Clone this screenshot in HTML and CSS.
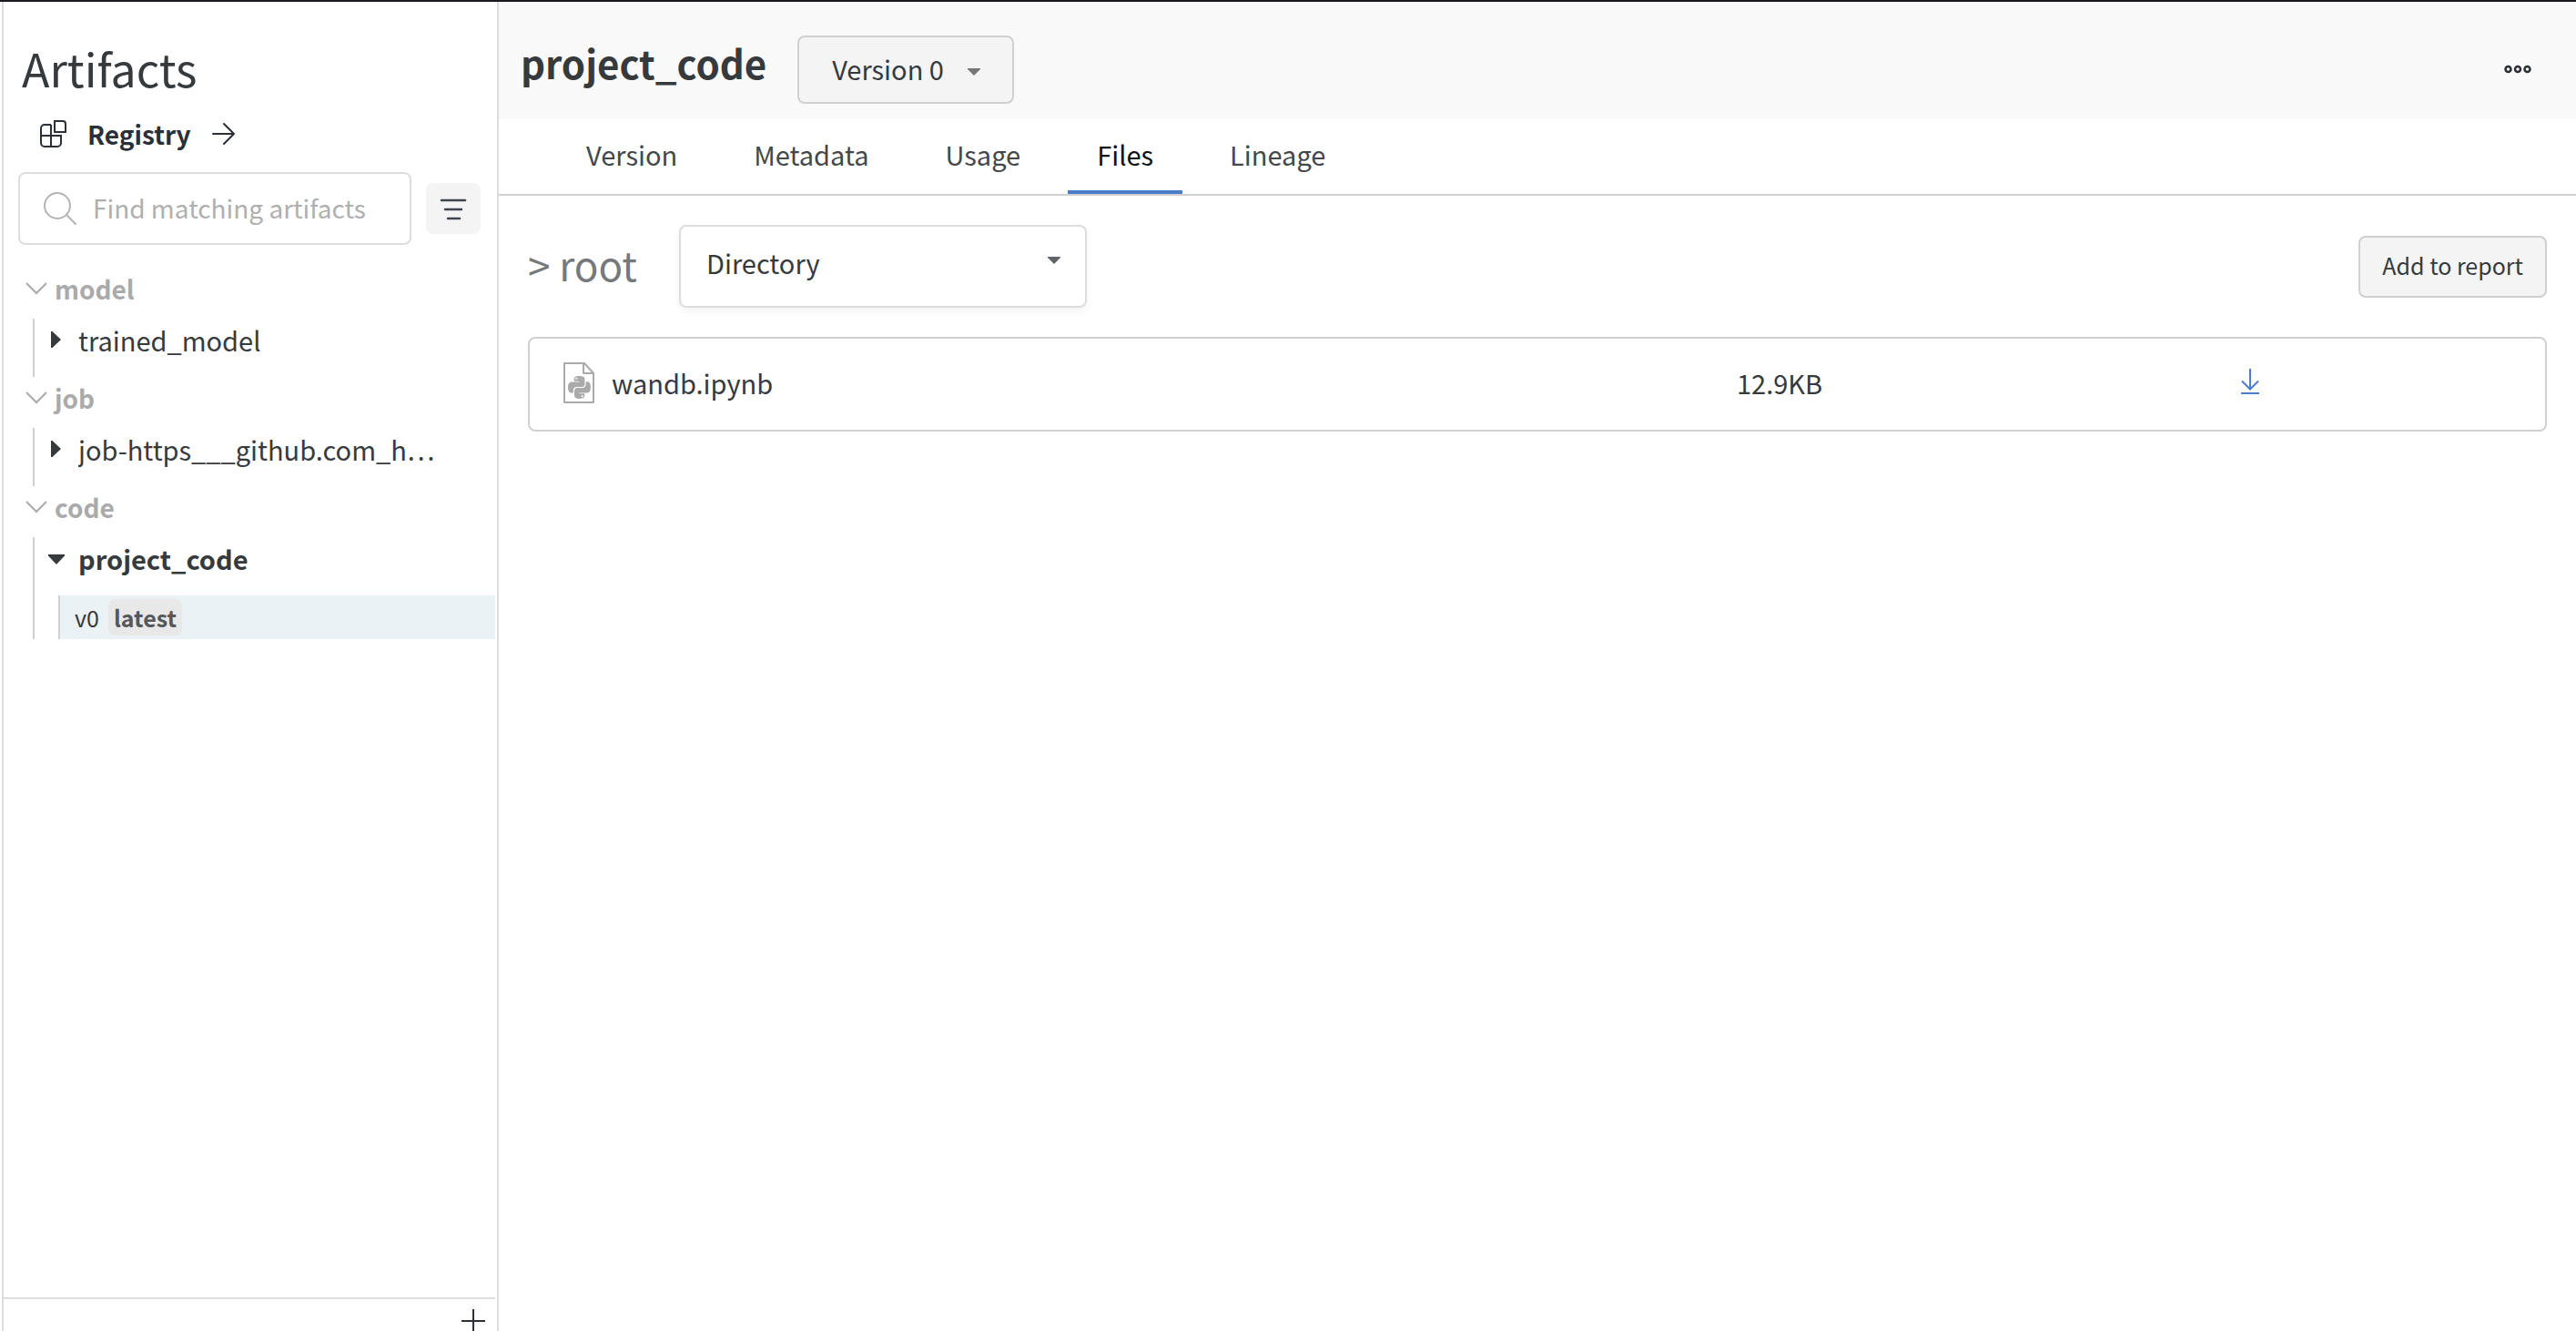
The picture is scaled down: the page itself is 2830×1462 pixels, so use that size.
FILE: index.html
```html
<!DOCTYPE html>
<html lang="en">
<head>
<meta charset="utf-8">
<meta name="viewport" content="width=device-width, initial-scale=1">
<title>project_code – Artifacts</title>
<link rel="stylesheet" href="styles.css">
</head>
<body>
<div class="app">
  <aside class="sidebar">
    <h1 class="sidebar-title">Artifacts</h1>
    <a class="registry" href="#registry">
      <svg class="icon" width="32" height="32" viewBox="0 0 32 32" fill="none" stroke="currentColor" stroke-width="2">
        <path d="M14 6H7a4 4 0 0 0-4 4v16a4 4 0 0 0 4 4h14a4 4 0 0 0 4-4v-8H3M14 6v24M18 2h9a3 3 0 0 1 3 3v9H18z"/>
      </svg>
      <span>Registry</span>
      <svg class="icon" width="28" height="28" viewBox="0 0 28 28" fill="none" stroke="currentColor" stroke-width="2" stroke-linecap="round" stroke-linejoin="round">
        <path d="M2 14h23M14 3l11 11-11 11"/>
      </svg>
    </a>
    <div class="search-row">
      <label class="search">
        <svg class="icon" width="40" height="40" viewBox="0 0 40 40" fill="none" stroke="currentColor" stroke-width="2" stroke-linecap="round">
          <circle cx="17" cy="18" r="14"/><path d="M27 28l10 10"/>
        </svg>
        <input class="search-input" type="text" placeholder="Find matching artifacts" aria-label="Find matching artifacts">
      </label>
      <button class="filter" type="button" aria-label="Filter">
        <svg class="icon" width="32" height="32" viewBox="0 0 32 32" stroke="currentColor" stroke-width="2.500" stroke-linecap="round">
          <path d="M3 7h26M7 17h18M10 27h13"/>
        </svg>
      </button>
    </div>
    <nav class="tree" aria-label="Artifacts">
      <section>
        <button class="group" type="button" aria-expanded="true">
          <svg class="icon" width="24" height="14" viewBox="0 0 24 14" fill="none" stroke="currentColor" stroke-width="2"><path d="M1 1l11 11L23 1"/></svg>
          <span>model</span>
        </button>
        <div class="branch">
          <button class="item" type="button" aria-expanded="false">
            <svg class="icon" width="20" height="20" viewBox="0 0 20 20" fill="currentColor"><path d="M4 1h1.500l9.500 9-9.500 9H4z"/></svg>
            <span class="item-name">trained_model</span>
          </button>
        </div>
      </section>
      <section>
        <button class="group" type="button" aria-expanded="true">
          <svg class="icon" width="24" height="14" viewBox="0 0 24 14" fill="none" stroke="currentColor" stroke-width="2"><path d="M1 1l11 11L23 1"/></svg>
          <span>job</span>
        </button>
        <div class="branch">
          <button class="item" type="button" aria-expanded="false">
            <svg class="icon" width="20" height="20" viewBox="0 0 20 20" fill="currentColor"><path d="M4 1h1.500l9.500 9-9.500 9H4z"/></svg>
            <span class="item-name">job-https___github.com_h…</span>
          </button>
        </div>
      </section>
      <section>
        <button class="group" type="button" aria-expanded="true">
          <svg class="icon" width="24" height="14" viewBox="0 0 24 14" fill="none" stroke="currentColor" stroke-width="2"><path d="M1 1l11 11L23 1"/></svg>
          <span>code</span>
        </button>
        <div class="branch branch-open">
          <button class="item item-open" type="button" aria-expanded="true">
            <svg class="icon" width="20" height="20" viewBox="0 0 20 20" fill="currentColor"><path d="M1 6h18v1.500L10 17 1 7.500z"/></svg>
            <span class="item-name">project_code</span>
          </button>
          <a class="version" href="#v0">v0 <span class="tag">latest</span></a>
        </div>
      </section>
    </nav>
    <footer class="sidebar-footer">
      <button class="plain" type="button" aria-label="Add artifact">
        <svg class="icon" width="28" height="28" viewBox="0 0 28 28" fill="none" stroke="currentColor" stroke-width="2"><path d="M14 1v26M1 14h26"/></svg>
      </button>
    </footer>
  </aside>

  <main class="main">
    <header class="header">
      <h2 class="header-title">project_code</h2>
      <div class="picker picker-version">
        <select class="picker-select" aria-label="Version">
          <option>Version 0</option>
        </select>
        <svg class="caret" width="16" height="10" viewBox="0 0 16 10" fill="currentColor"><path d="M1 1h14v1L8 9 1 2z"/></svg>
      </div>
      <button class="plain more" type="button" aria-label="More actions">
        <svg class="icon" width="32" height="10" viewBox="0 0 32 10" fill="none" stroke="currentColor" stroke-width="2.500">
          <circle cx="5.500" cy="5" r="3"/><circle cx="16" cy="5" r="3"/><circle cx="26.500" cy="5" r="3"/>
        </svg>
      </button>
    </header>
    <nav class="tabs" aria-label="Artifact sections">
      <a class="tab" href="#version">Version</a>
      <a class="tab" href="#metadata">Metadata</a>
      <a class="tab" href="#usage">Usage</a>
      <a class="tab tab-active" href="#files" aria-current="page">Files</a>
      <a class="tab" href="#lineage">Lineage</a>
    </nav>
    <section class="files">
      <div class="toolbar">
        <span class="path">&gt; root</span>
        <div class="picker picker-view">
          <select class="picker-select" aria-label="View">
            <option>Directory</option>
          </select>
          <svg class="caret" width="16" height="10" viewBox="0 0 16 10" fill="currentColor"><path d="M1 1h14v1L8 9 1 2z"/></svg>
        </div>
        <button class="report" type="button">Add to report</button>
      </div>
      <div class="card">
        <table class="file-table">
          <tbody>
            <tr>
              <td class="col-name">
                <a class="file" href="#wandb.ipynb">
                  <svg class="file-icon" width="36" height="48" viewBox="0 0 36 48">
                    <path d="M2 3h22l10 11v32H2zM23 3v11h11" fill="none" stroke="currentColor" stroke-width="2" stroke-linejoin="round"/>
                    <g transform="translate(6 17) scale(1.040)" fill="currentColor">
                      <path d="M11.900 0C6.800 0 6.500 2 6.500 3.300v2.200H12v.7H4.200C1.800 6.200 0 8 0 12c0 4.100 1.600 5.900 3.900 5.900h1.700v-2.700c0-2 1.600-3.600 3.600-3.600h5.500c1.600 0 3-1.400 3-3V3.300C17.700 1 15.500 0 11.900 0zM8.900 1.700a1 1 0 1 1 0 2 1 1 0 0 1 0-2z"/>
                      <path d="M12.100 24c5.100 0 5.400-2 5.400-3.300v-2.200H12v-.7h7.800c2.400 0 4.200-1.800 4.200-5.800 0-4.100-1.600-5.900-3.900-5.900h-1.300v2.700c0 2-1.600 3.600-3.600 3.600H9.700c-1.600 0-3 1.400-3 3v5.300c0 2.300 1.800 3.300 5.400 3.300zM15.100 22.300a1 1 0 1 1 0-2 1 1 0 0 1 0 2z"/>
                    </g>
                  </svg>
                  <span>wandb.ipynb</span>
                </a>
              </td>
              <td class="col-size">12.9KB</td>
              <td class="col-action">
                <a class="download" href="#download" aria-label="Download wandb.ipynb">
                  <svg class="icon" width="22" height="28" viewBox="0 0 22 28" fill="none" stroke="currentColor" stroke-width="2"><path d="M11 0v22M2 13.500l9 9 9-9M1 27h20"/></svg>
                </a>
              </td>
            </tr>
          </tbody>
        </table>
      </div>
    </section>
  </main>
</div>
</body>
</html>
```

FILE: styles.css
```css
* {
  box-sizing: border-box;
}

body {
  margin: 0;
  background: #fff;
  color: #363a3d;
  font-family: "Noto Sans CJK SC", "Noto Sans", sans-serif;
  font-size: 29px;
  line-height: 48px;
}

button,
input,
select {
  margin: 0;
  font: inherit;
  color: inherit;
}

button {
  padding: 0;
  border: 0;
  background: none;
  text-align: left;
  cursor: pointer;
}

a {
  color: inherit;
  text-decoration: none;
}

.icon,
.file-icon {
  display: block;
  flex: none;
}

.app {
  display: flex;
  height: 100vh;
  border-top: 2px solid #1a191f;
}

/* Sidebar */

.sidebar {
  display: flex;
  flex: none;
  flex-direction: column;
  width: 546px;
  margin-left: 2px;
  padding: 40px 2px 0 0;
  border: solid #ddd;
  border-width: 0 2px;
  overflow: hidden;
}

.sidebar-title {
  margin: 0 0 20px;
  padding-left: 20px;
  font-size: 50px;
  font-weight: 400;
  line-height: 64px;
}

.registry {
  display: flex;
  align-items: center;
  gap: 22px;
  padding-left: 38px;
  color: #2b3038;
  font-size: 28px;
  font-weight: 700;
  line-height: 42px;
}

.search-row {
  display: flex;
  align-items: center;
  gap: 16px;
  margin-top: 21px;
  padding: 0 16px;
}

.search {
  display: flex;
  flex: 1;
  align-items: center;
  gap: 16px;
  height: 80px;
  padding: 0 24px 2px;
  border: 2px solid #ddd;
  border-radius: 8px;
  color: #b3b3b3;
}

.search-input {
  flex: 1;
  min-width: 0;
  padding: 0;
  border: 0;
  outline: 0;
  background: none;
  color: #363a3d;
  font-size: 28px;
}

.search-input::placeholder {
  color: #afafaf;
  opacity: 1;
}

.filter {
  display: grid;
  flex: none;
  place-items: center;
  width: 60px;
  height: 56px;
  border-radius: 8px;
  background: #f4f4f4;
  color: #3f4650;
}

.tree {
  flex: 1;
  padding-top: 28px;
}

.group {
  display: flex;
  align-items: center;
  gap: 8px;
  margin-bottom: 13px;
  padding-left: 24px;
  color: #aaa;
  font-size: 28px;
  font-weight: 700;
  line-height: 40px;
}

.branch {
  margin: 0 0 3px 32px;
  padding-bottom: 18px;
  border-left: 2px solid #d0d0d0;
}

.branch-open {
  padding-bottom: 0;
}

.item {
  display: flex;
  align-items: center;
  gap: 14px;
  width: 100%;
  padding-left: 14px;
  line-height: 46px;
}

.item-name {
  overflow: hidden;
  text-overflow: ellipsis;
  white-space: nowrap;
}

.item-open {
  margin-bottom: 18px;
  font-weight: 700;
}

.version {
  display: flex;
  align-items: center;
  gap: 10px;
  height: 48px;
  margin-left: 26px;
  padding-left: 16px;
  border-left: 2px solid #d0d0d0;
  background: #eaf2f5;
  font-size: 25px;
}

.tag {
  padding: 0 6px;
  border-radius: 8px;
  background: #e8e8e8;
  color: #55585a;
  font-weight: 700;
  line-height: 40px;
}

.sidebar-footer {
  display: flex;
  justify-content: flex-end;
  height: 37px;
  padding: 10px 10px 0 0;
  border-top: 2px solid #ddd;
  overflow: hidden;
}

/* Main panel */

.main {
  flex: 1;
  min-width: 0;
}

.header {
  display: flex;
  align-items: flex-start;
  padding: 37px 48px 17px 24px;
  background: #f9f9f9;
}

.header-title {
  margin: 0 34px 0 0;
  font-size: 42px;
  font-weight: 700;
  line-height: 60px;
}

.plain {
  color: #2b3038;
}

.more {
  margin-left: auto;
  padding: 32px 0;
}

.picker {
  display: grid;
  align-items: center;
}

.picker-select,
.caret {
  grid-area: 1 / 1;
}

.picker-select {
  width: 100%;
  height: 100%;
  border: 2px solid #d0d0d0;
  border-radius: 8px;
  appearance: none;
  outline: 0;
}

.caret {
  justify-self: end;
  pointer-events: none;
}

.picker-version {
  width: 238px;
  height: 75px;
}

.picker-version .picker-select {
  padding: 0 36px 4px;
  background: #f4f4f4;
}

.picker-version .caret {
  margin: 4px 36px 0 0;
  color: #777;
}

.tabs {
  display: flex;
  gap: 20px;
  padding: 14px 64px 0;
  border-bottom: 2px solid #d0d0d0;
}

.tab {
  padding: 0 32px 16px;
  border-bottom: 4px solid transparent;
  color: #44484b;
}

.tab-active {
  border-color: #4c7dcc;
  color: #111;
}

.files {
  padding: 32px;
}

.toolbar {
  display: flex;
  align-items: center;
  margin-bottom: 32px;
}

.path {
  margin-right: 46px;
  padding-bottom: 6px;
  color: #76797b;
  font-size: 44px;
}

.picker-view {
  width: 448px;
  height: 91px;
}

.picker-view .picker-select {
  padding: 0 28px 10px;
  border-color: #ddd;
  background: #fff;
  box-shadow: 0 4px 8px #0000000d;
}

.picker-view .caret {
  margin: 0 28px 14px 0;
  color: #606468;
}

.report {
  height: 68px;
  margin-left: auto;
  padding: 0 24px 4px;
  border: 2px solid #d0d0d0;
  border-radius: 8px;
  background: #f4f4f4;
  font-size: 25px;
}

.card {
  padding-right: 4px;
  border: 2px solid #d0d0d0;
  border-radius: 8px;
}

.file-table {
  width: 100%;
  border-collapse: collapse;
  table-layout: fixed;
}

.file-table td {
  height: 100px;
  padding: 0 0 4px;
}

.col-name {
  width: 60%;
}

.col-size {
  width: 25%;
}

.file {
  display: flex;
  align-items: center;
  gap: 18px;
  padding-left: 36px;
}

.file-icon {
  color: #aaa;
}

.download {
  display: inline-block;
  color: #4c7dcc;
}
```
